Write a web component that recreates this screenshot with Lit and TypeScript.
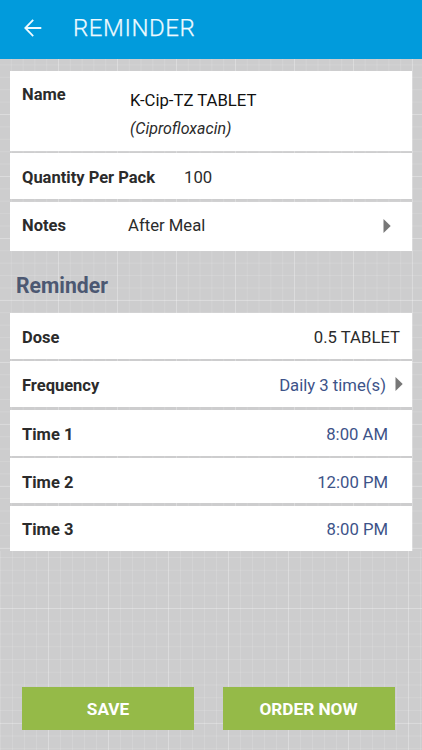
import { LitElement, html, css, svg } from "lit";
import { customElement } from "lit/decorators.js";

const caret = svg`<svg class="caret" width="8" height="14" viewBox="0 0 8 14"><path d="M0.5 0L7.7 7L0.5 14Z" fill="#777"/></svg>`;

@customElement("app-root")
export class AppRoot extends LitElement {
  static styles = css`
    :host {
      display: flex;
      flex-direction: column;
      height: 750px;
      box-sizing: border-box;
      overflow: hidden;
      font-family: Roboto, "Liberation Sans", sans-serif;
      font-size: 16.7px;
      line-height: 20px;
      color: #2b2b2b;
      background: #cdcdce;
    }
    .paper {
      background-color: #cdcdce;
      background-image:
        linear-gradient(90deg, rgba(255, 255, 255, 0.18) 1px, transparent 1px),
        linear-gradient(rgba(255, 255, 255, 0.2) 1px, transparent 1px),
        linear-gradient(90deg, rgba(255, 255, 255, 0.12) 1px, transparent 1px),
        linear-gradient(rgba(255, 255, 255, 0.12) 1px, transparent 1px);
    }
    .form {
      box-sizing: border-box;
      height: 492px;
      flex: none;
      padding-top: 12px;
      background-size: 59px 100%, 100% 62px, 11.8px 100%, 100% 12.4px;
      background-position: 58px 0, 0 55px, 58px 0, 0 55px;
    }
    .footer {
      flex: 1;
      display: flex;
      flex-direction: column;
      background-size: 60px 100%, 100% 115px, 12px 100%, 100% 12.75px;
      background-position: 48px 0, 0 57px, 48px 0, 0 57px;
    }
    .bar {
      display: flex;
      align-items: center;
      height: 59px;
      flex: none;
      box-sizing: border-box;
      padding: 0 0 3px 24px;
      background: #019bdc;
      color: #eefaff;
    }
    .title {
      margin: 0 0 0 31px;
      font-size: 24px;
      line-height: 28px;
      font-weight: 300;
      letter-spacing: 0.58px;
      -webkit-text-stroke: 0.25px #eefaff;
    }
    .card {
      display: flex;
      flex-direction: column;
      gap: 2.4px;
      margin: 0 10px;
    }
    .row {
      display: flex;
      align-items: center;
      box-sizing: border-box;
      height: 46px;
      padding: 4px 12px 0;
      background: #fff;
    }
    .short {
      height: 45.2px;
    }
    .name {
      height: 80px;
      align-items: flex-start;
      padding-top: 14px;
    }
    .notes {
      height: 49px;
      padding: 0 21px 0 12px;
    }
    .label {
      font-size: 16.5px;
      font-weight: 700;
      white-space: nowrap;
    }
    .notes .label {
      width: 106px;
    }
    .name .label {
      width: 108px;
    }
    .drug {
      margin-top: 6px;
      color: #111;
    }
    .generic {
      margin-top: 8px;
      font-size: 16px;
      font-style: italic;
    }
    .count {
      margin-left: 29px;
    }
    .value {
      margin-left: auto;
    }
    .blue {
      color: #3d5389;
    }
    .time {
      margin-right: 12px;
    }
    .notes .caret {
      margin-left: auto;
    }
    .frequency {
      padding-right: 9px;
    }
    .frequency .caret {
      margin: 0 0 4px 9px;
    }
    .heading {
      margin: 21px 16px 14px;
      font-size: 21.2px;
      line-height: 27px;
      font-weight: 700;
      color: #4c5872;
    }
    .actions {
      display: grid;
      grid-template-columns: 172px 172px;
      gap: 28.5px;
      margin: auto 0 20.5px 22px;
    }
    .button {
      height: 42.5px;
      padding: 2px 0 0;
      border: 0;
      background: #95ba48;
      color: #fff;
      font: 700 17.2px/20px Roboto, "Liberation Sans", sans-serif;
    }
  `;

  render() {
    const times = [
      ["Time 1", "8:00 AM", ""],
      ["Time 2", "12:00 PM", "short"],
      ["Time 3", "8:00 PM", "short"],
    ];
    return html`
      <header class="bar">
        <svg width="18" height="18" viewBox="0 0 18 18" fill="none" stroke="#eefaff" stroke-width="1.8">
          <path d="M9.2 0.9L1.3 9L9.2 17.1M1.3 9H17.3" />
        </svg>
        <h1 class="title">REMINDER</h1>
      </header>
      <main class="form paper">
        <section class="card">
          <div class="row name">
            <div class="label">Name</div>
            <div>
              <div class="drug">K-Cip-TZ TABLET</div>
              <div class="generic">(Ciprofloxacin)</div>
            </div>
          </div>
          <div class="row">
            <div class="label">Quantity Per Pack</div>
            <div class="count">100</div>
          </div>
          <div class="row notes">
            <div class="label">Notes</div>
            <div>After Meal</div>
            ${caret}
          </div>
        </section>
        <h2 class="heading">Reminder</h2>
        <section class="card">
          <div class="row">
            <div class="label">Dose</div>
            <div class="value">0.5 TABLET</div>
          </div>
          <div class="row frequency">
            <div class="label">Frequency</div>
            <div class="value blue">Daily 3 time(s)</div>
            ${caret}
          </div>
          ${times.map(
            ([label, time, size]) => html`<div class="row ${size}">
              <div class="label">${label}</div>
              <div class="value blue time">${time}</div>
            </div>`
          )}
        </section>
      </main>
      <footer class="footer paper">
        <div class="actions">
          <button class="button">SAVE</button>
          <button class="button">ORDER NOW</button>
        </div>
      </footer>
    `;
  }
}
